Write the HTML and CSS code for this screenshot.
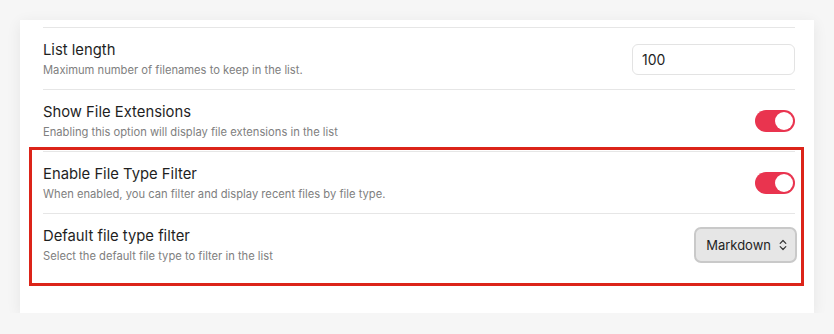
FILE: index.html
```html
<!DOCTYPE html>
<html lang="en">
<head>
  <meta charset="UTF-8" />
  <title>Settings</title>
  <link rel="stylesheet" href="styles.css">
</head>
<body>
  <div class="card">
    <div class="setting">
      <div class="info">
        <div class="name">List length</div>
        <div class="desc">Maximum number of filenames to keep in the list.</div>
      </div>
      <input class="text-input" type="text" value="100" />
    </div>

    <div class="setting">
      <div class="info">
        <div class="name">Show File Extensions</div>
        <div class="desc">Enabling this option will display file extensions in the list</div>
      </div>
      <div class="toggle on"><div class="knob"></div></div>
    </div>

    <div class="setting">
      <div class="info">
        <div class="name">Enable File Type Filter</div>
        <div class="desc">When enabled, you can filter and display recent files by file type.</div>
      </div>
      <div class="toggle on"><div class="knob"></div></div>
    </div>

    <div class="setting">
      <div class="info">
        <div class="name">Default file type filter</div>
        <div class="desc">Select the default file type to filter in the list</div>
      </div>
      <div class="dropdown">
        <span>Markdown</span>
        <svg width="8" height="12" viewBox="0 0 8 12">
          <path d="M1.2 4.3 L4 1.5 L6.8 4.3 M1.2 7.7 L4 10.5 L6.8 7.7" fill="none" stroke="#333" stroke-width="1.2" stroke-linecap="round" stroke-linejoin="round"/>
        </svg>
      </div>
    </div>

    <!-- annotation box around the file type settings -->
    <div class="highlight"></div>
  </div>
</body>
</html>
```

FILE: styles.css
```css
* {
  margin: 0;
  padding: 0;
  box-sizing: border-box;
}

body {
  background: #f6f6f6;
  font-family: 'Inter', 'Noto Sans', sans-serif;
  overflow: hidden;
}

.card {
  position: relative;
  margin: 20px 0 0 20px;
  width: 794px;
  height: 293px;
  background: #fff;
  padding: 7px 19px 0 23px;
  box-shadow: 0 3px 14px rgba(0, 0, 0, 0.07);
}

.setting {
  display: flex;
  align-items: center;
  justify-content: space-between;
  border-top: 1px solid #e6e6e6;
  padding: 12px 0 11px;
}

.name {
  font-size: 14.8px;
  line-height: 20px;
  color: #1f1f1f;
}

.desc {
  margin-top: 2px;
  font-size: 11.2px;
  line-height: 16px;
  color: #808080;
}

.text-input {
  width: 163px;
  height: 31px;
  border: 1px solid #e3e3e3;
  border-radius: 6px;
  padding: 0 9px;
  font-family: inherit;
  font-size: 14px;
  color: #1f1f1f;
  outline: none;
}

.toggle {
  width: 40px;
  height: 22px;
  border-radius: 11px;
  background: #e9344f;
  padding: 2px;
  display: flex;
  justify-content: flex-end;
}

.knob {
  width: 18px;
  height: 18px;
  border-radius: 50%;
  background: #fff;
}

.dropdown {
  display: flex;
  align-items: center;
  gap: 8px;
  height: 36px;
  margin-right: -2px;
  padding: 0 8px 0 10px;
  background: #e6e6e6;
  border: 2px solid #c9c9c9;
  border-radius: 7px;
  font-size: 13px;
  color: #1f1f1f;
}

.highlight {
  position: absolute;
  left: 9px;
  top: 127px;
  width: 775px;
  height: 139px;
  border: 3px solid #dc2419;
}
```
